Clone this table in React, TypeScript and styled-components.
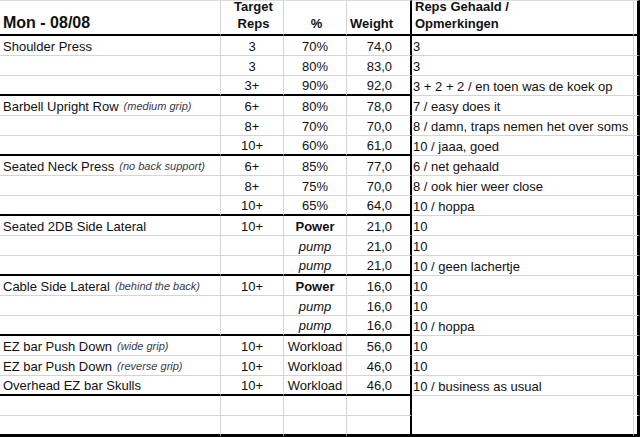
import React from 'react';
import styled, { createGlobalStyle } from 'styled-components';

type WorkSet = { reps: string; pct: string; weight: string; note: string };
type Exercise = { name: string; grip?: string; sets: WorkSet[] };

const blocks: Exercise[][] = [
  [
    {
      name: 'Shoulder Press',
      sets: [
        { reps: '3', pct: '70%', weight: '74,0', note: '3' },
        { reps: '3', pct: '80%', weight: '83,0', note: '3' },
        { reps: '3+', pct: '90%', weight: '92,0', note: '3 + 2 + 2 / en toen was de koek op' },
      ],
    },
  ],
  [
    {
      name: 'Barbell Upright Row',
      grip: '(medium grip)',
      sets: [
        { reps: '6+', pct: '80%', weight: '78,0', note: '7 / easy does it' },
        { reps: '8+', pct: '70%', weight: '70,0', note: '8 / damn, traps nemen het over soms' },
        { reps: '10+', pct: '60%', weight: '61,0', note: '10 / jaaa, goed' },
      ],
    },
  ],
  [
    {
      name: 'Seated Neck Press',
      grip: '(no back support)',
      sets: [
        { reps: '6+', pct: '85%', weight: '77,0', note: '6 / net gehaald' },
        { reps: '8+', pct: '75%', weight: '70,0', note: '8 / ook hier weer close' },
        { reps: '10+', pct: '65%', weight: '64,0', note: '10 / hoppa' },
      ],
    },
  ],
  [
    {
      name: 'Seated 2DB Side Lateral',
      sets: [
        { reps: '10+', pct: 'Power', weight: '21,0', note: '10' },
        { reps: '', pct: 'pump', weight: '21,0', note: '10' },
        { reps: '', pct: 'pump', weight: '21,0', note: '10 / geen lachertje' },
      ],
    },
  ],
  [
    {
      name: 'Cable Side Lateral',
      grip: '(behind the back)',
      sets: [
        { reps: '10+', pct: 'Power', weight: '16,0', note: '10' },
        { reps: '', pct: 'pump', weight: '16,0', note: '10' },
        { reps: '', pct: 'pump', weight: '16,0', note: '10 / hoppa' },
      ],
    },
  ],
  [
    {
      name: 'EZ bar Push Down',
      grip: '(wide grip)',
      sets: [{ reps: '10+', pct: 'Workload', weight: '56,0', note: '10' }],
    },
    {
      name: 'EZ bar Push Down',
      grip: '(reverse grip)',
      sets: [{ reps: '10+', pct: 'Workload', weight: '46,0', note: '10' }],
    },
    {
      name: 'Overhead EZ bar Skulls',
      sets: [{ reps: '10+', pct: 'Workload', weight: '46,0', note: '10 / business as usual' }],
    },
  ],
];

type Line = 'thin' | 'thick' | 'bottom' | 'none';

const GlobalStyle = createGlobalStyle`
  html, body {
    margin: 0;
    padding: 0;
    background: #ffffff;
  }
  body {
    font-family: "Liberation Sans", Arial, sans-serif;
    color: #111111;
  }
`;

const Sheet = styled.div`
  display: grid;
  grid-template-columns: 221px 63px 63px 65px 222px 6px;
  width: 640px;
  font-size: 13px;
`;

const borderFor = (line: Line) => {
  if (line === 'thick') return '2px solid #000';
  if (line === 'bottom') return '3px solid #000';
  if (line === 'none') return '1px solid transparent';
  return '1px solid #d4d4d4';
};

const Cell = styled.div<{
  $align?: 'left' | 'center' | 'right';
  $line: Line;
  $edge?: 'thin' | 'thick' | 'outer';
  $tall?: boolean;
}>`
  box-sizing: border-box;
  height: ${(p) => (p.$tall ? '21px' : '20px')};
  display: flex;
  align-items: center;
  justify-content: ${(p) =>
    p.$align === 'center' ? 'center' : p.$align === 'right' ? 'flex-end' : 'flex-start'};
  padding: 1px ${(p) => (p.$align === 'right' ? '18px' : '0')} 0
    ${(p) => (p.$align === 'left' ? '3px' : '0')};
  border-bottom: ${(p) => borderFor(p.$line)};
  border-right: ${(p) =>
    p.$edge === 'thick' ? '2px solid #000' : p.$edge === 'outer' ? '3px solid #000' : '1px solid #d4d4d4'};
  white-space: nowrap;
  line-height: 15px;
`;

const NoteCell = styled(Cell)`
  padding-left: 1px;
`;

const HeadCell = styled.div<{ $align?: 'left' | 'center'; $edge?: 'thin' | 'thick' | 'outer' }>`
  box-sizing: border-box;
  height: 36px;
  display: flex;
  flex-direction: column;
  justify-content: flex-end;
  align-items: ${(p) => (p.$align === 'center' ? 'center' : 'flex-start')};
  text-align: ${(p) => (p.$align === 'center' ? 'center' : 'left')};
  padding: 0 0 2px 3px;
  border-top: 1px solid #dcdcdc;
  border-bottom: 2px solid #000;
  border-right: ${(p) =>
    p.$edge === 'thick' ? '2px solid #000' : p.$edge === 'outer' ? '3px solid #000' : '1px solid #d4d4d4'};
  font-weight: bold;
  font-size: 13px;
  line-height: 17px;
  white-space: nowrap;
`;

const DayTitle = styled.span`
  font-size: 16px;
  line-height: 18px;
`;

const Grip = styled.i`
  font-size: 11px;
  color: #3a3a44;
  margin-left: 5px;
`;

const Intensity = styled.span<{ $kind: 'power' | 'pump' | 'plain' }>`
  font-weight: ${(p) => (p.$kind === 'power' ? 'bold' : 'normal')};
  font-style: ${(p) => (p.$kind === 'pump' ? 'italic' : 'normal')};
`;

const kindOf = (pct: string) => (pct === 'Power' ? 'power' : pct === 'pump' ? 'pump' : 'plain');

type RowData = {
  key: string;
  name?: string;
  grip?: string;
  set?: WorkSet;
  line: Line;
  noteLine: Line;
  tall?: boolean;
};

function buildRows(): RowData[] {
  const rows: RowData[] = [];
  blocks.forEach((block, b) => {
    block.forEach((ex, e) => {
      ex.sets.forEach((set, i) => {
        const lastOfBlock = e === block.length - 1 && i === ex.sets.length - 1;
        rows.push({
          key: `${b}-${e}-${i}`,
          name: i === 0 ? ex.name : undefined,
          grip: i === 0 ? ex.grip : undefined,
          set,
          line: lastOfBlock ? 'thick' : 'thin',
          noteLine: 'thin',
        });
      });
    });
  });
  rows.push({ key: 'empty-1', line: 'thin', noteLine: 'none' });
  rows.push({ key: 'empty-2', line: 'bottom', noteLine: 'bottom', tall: true });
  return rows;
}

export default function App() {
  const rows = buildRows();

  return (
    <>
      <GlobalStyle />
      <Sheet>
        <HeadCell>
          <DayTitle>Mon - 08/08</DayTitle>
        </HeadCell>
        <HeadCell $align="center">
          <span>Target</span>
          <span>Reps</span>
        </HeadCell>
        <HeadCell $align="center">%</HeadCell>
        <HeadCell $edge="thick">Weight</HeadCell>
        <HeadCell>
          <span>Reps Gehaald /</span>
          <span>Opmerkingen</span>
        </HeadCell>
        <HeadCell $edge="outer" />

        {rows.map((row) => (
          <React.Fragment key={row.key}>
            <Cell $align="left" $line={row.line} $tall={row.tall}>
              {row.name}
              {row.grip && <Grip>{row.grip}</Grip>}
            </Cell>
            <Cell $align="center" $line={row.line} $tall={row.tall}>
              {row.set?.reps}
            </Cell>
            <Cell $align="center" $line={row.line} $tall={row.tall}>
              {row.set && <Intensity $kind={kindOf(row.set.pct)}>{row.set.pct}</Intensity>}
            </Cell>
            <Cell $align="right" $line={row.line} $edge="thick" $tall={row.tall}>
              {row.set?.weight}
            </Cell>
            <NoteCell $align="left" $line={row.noteLine} $tall={row.tall}>
              {row.set?.note}
            </NoteCell>
            <Cell $line={row.noteLine} $edge="outer" $tall={row.tall} />
          </React.Fragment>
        ))}
      </Sheet>
    </>
  );
}
